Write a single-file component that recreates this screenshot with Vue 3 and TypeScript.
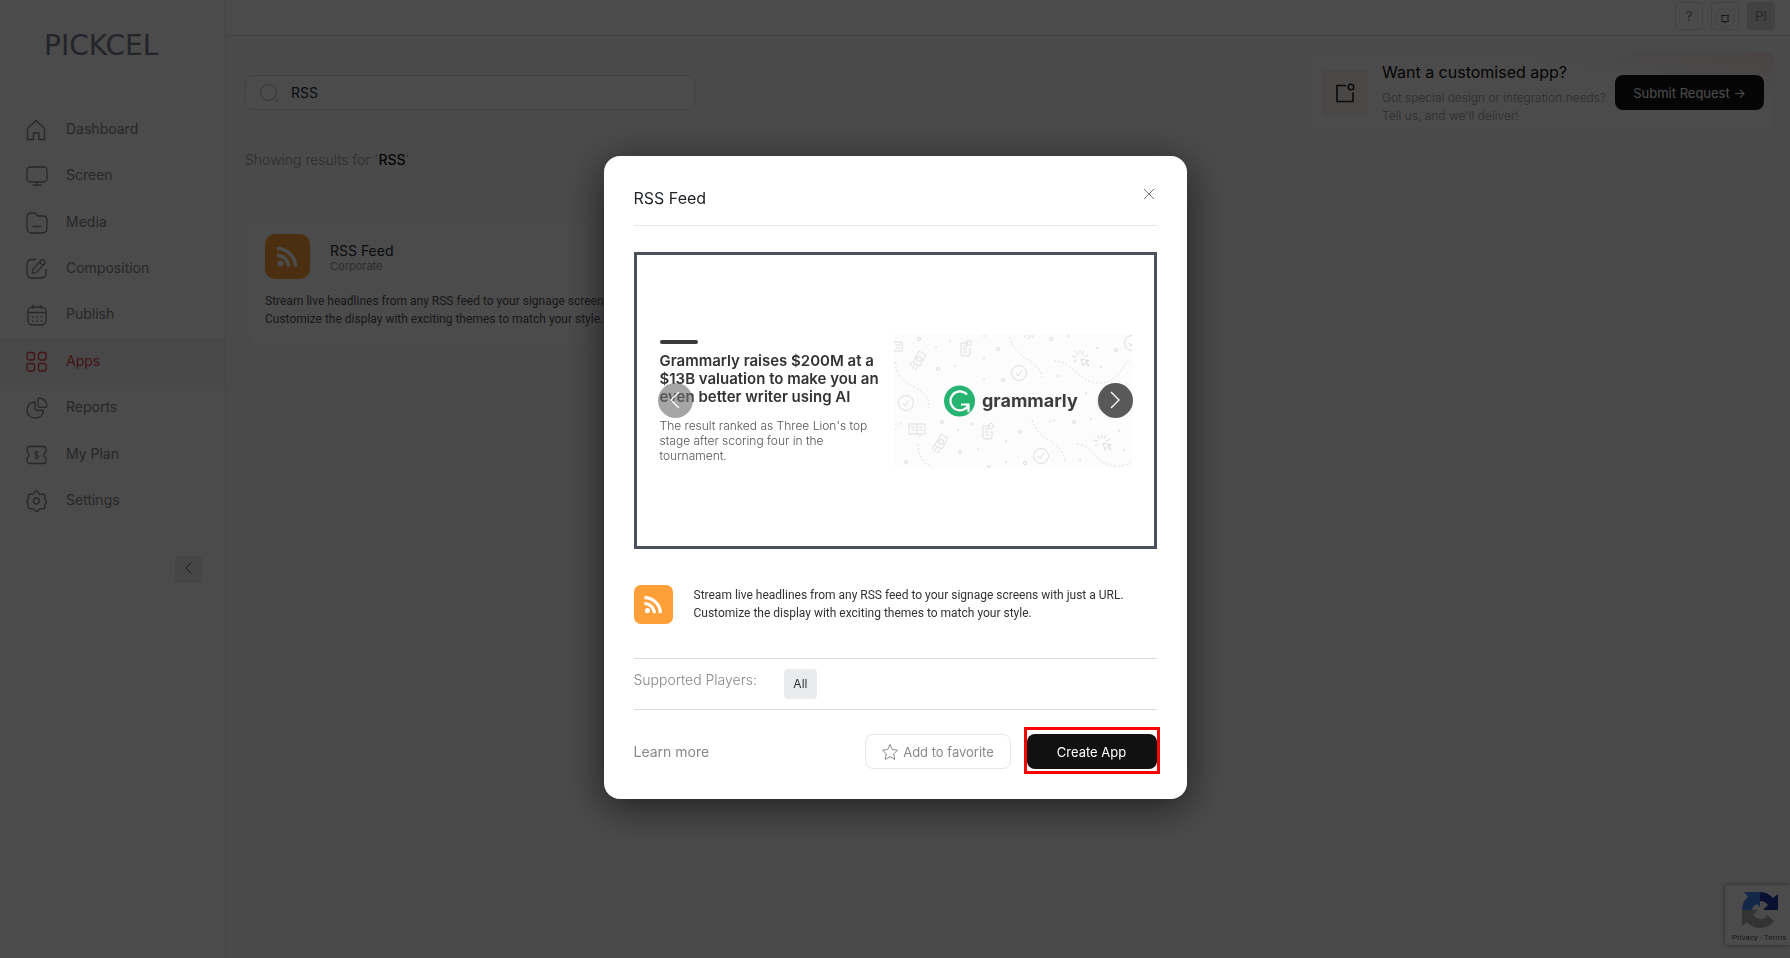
<script setup lang="ts">
import { ref } from 'vue'

interface NavItem {
  label: string
  icon: string
}

const navItems: NavItem[] = [
  { label: 'Dashboard', icon: 'home' },
  { label: 'Screen', icon: 'screen' },
  { label: 'Media', icon: 'media' },
  { label: 'Composition', icon: 'compose' },
  { label: 'Publish', icon: 'publish' },
  { label: 'Apps', icon: 'apps' },
  { label: 'Reports', icon: 'reports' },
  { label: 'My Plan', icon: 'plan' },
  { label: 'Settings', icon: 'settings' },
]

const active = ref('Apps')
const query = ref('RSS')
</script>

<template>
  <div class="page">
    <aside class="sidebar">
      <div class="logo">PICKCEL</div>
      <nav class="nav">
        <a
          v-for="item in navItems"
          :key="item.label"
          href="#"
          class="nav-item"
          :class="{ active: item.label === active }"
          @click.prevent="active = item.label"
        >
          <svg class="nav-icon" viewBox="0 0 22 22" aria-hidden="true">
            <path v-if="item.icon === 'home'" d="M1.5 20.5V9.5L10 1.5l8.500 8v11h-5.500v-6.500h-5.500v6.500z" />
            <g v-else-if="item.icon === 'screen'">
              <rect x="1" y="2" width="20" height="15" rx="3.500" />
              <path d="M11 17v3M6.500 20h9" />
            </g>
            <g v-else-if="item.icon === 'media'">
              <path d="M1 5.500Q1 1 5.500 1H8q1.500 0 2.300 1.200L11.500 4H17q4 0 4 4.500V16q0 5-5 5H6q-5 0-5-5zM6.500 14.500h9" />
            </g>
            <g v-else-if="item.icon === 'compose'">
              <path d="M10 1.500H6q-5 0-5 5V15q0 5 5 5h9q5 0 5-5v-4" />
              <path d="M15 2.300q1.500-1.500 3.300.2t.2 3.400l-8 8.200q-.6.600-1.500.7l-2.500.2.200-2.800q.1-.8.700-1.400zM13.500 4l3.500 3.500" />
            </g>
            <g v-else-if="item.icon === 'publish'">
              <rect x="2" y="3" width="18" height="18" rx="4.500" />
              <path d="M2 8.500h18M7 1v4M15 1v4" />
              <path class="dots" d="M6 13h1.500M10.300 13h1.500M14.600 13h1.500M6 17h1.500M10.300 17h1.500M14.600 17h1.500" />
            </g>
            <g v-else-if="item.icon === 'apps'">
              <rect x="1" y="1.500" width="7.500" height="7.500" rx="2" />
              <rect x="12.500" y="1.500" width="7.500" height="7.500" rx="2" />
              <rect x="1" y="12.500" width="7.500" height="7.500" rx="2" />
              <rect x="12.500" y="12.500" width="7.500" height="7.500" rx="2" />
            </g>
            <g v-else-if="item.icon === 'reports'">
              <path d="M9 5Q1 5.500 1 13.300 1.500 21 9.500 21q7.500-.3 8-7.500h-6q-2.500 0-2.500-2.500z" />
              <path d="M12 2.200Q12 1 13.500 1 20.500 2 21 9q0 1.300-1.500 1.300h-6q-1.500 0-1.500-1.500z" />
            </g>
            <g v-else-if="item.icon === 'plan'">
              <path d="M4 2.500h13q3 0 3 3v2q-2 1.500-2 3.500t2 3.500v2q0 3-3 3H4q-3 0-3-3v-2Q3 13 3 11T1 7.500v-2q0-3 3-3z" />
              <path class="thin" d="M12.500 9q-.2-1.200-2-1.200-2 0-2 1.500 0 1.300 2 1.600 2.200.3 2.200 1.700 0 1.600-2.200 1.600T8.200 13M10.500 6.500v9" />
            </g>
            <g v-else>
              <circle cx="10.500" cy="11" r="3" />
              <path d="M8.600 2.200q1.900-2.100 3.800 0l.7 1.500q.9 1 2.200.7l1.300-.3q2.500.1 2.700 2.600l-.6 1.600q-.2 1 .7 1.800 1.700 1 .5 2.700l-.6.800q-.9.900-.4 2 .5 2.900-2.200 3.300l-1.500-.2q-1.300-.2-2.100.8-1.500 3.300-4.600 1l-.8-1.200q-.7-.8-1.800-.5-3.200.7-3.900-2.400l.3-1.600q.3-1-.5-1.800-1.800-1.800-.2-3.500l.5-.5q.7-.8.3-1.800-.6-2.800 2.400-3.200l1.400.2q1.200.1 1.900-.8z" />
            </g>
          </svg>
          <span>{{ item.label }}</span>
        </a>
      </nav>
      <button class="collapse" type="button" aria-label="Collapse menu">
        <svg viewBox="0 0 12 12" aria-hidden="true"><path d="M8 1 3 6l5 5" /></svg>
      </button>
    </aside>

    <div class="main">
      <header class="topbar">
        <button type="button" class="square">?</button>
        <button type="button" class="square" aria-label="Notifications">
          <svg viewBox="0 0 20 20" aria-hidden="true">
            <circle class="ring" cx="10" cy="10" r="9.500" />
            <path d="M6 13.500h8M7 13V7.500h6V13M5.800 6.500 7.500 8M14.200 6.500 12.500 8M9 14.600h2" />
          </svg>
        </button>
        <button type="button" class="square avatar">PI</button>
      </header>

      <main class="content">
        <div class="results">
          <label class="search">
            <svg viewBox="0 0 18 18" aria-hidden="true">
              <circle cx="8.500" cy="8.500" r="8" />
              <path d="m14.500 14.500 3 3" />
            </svg>
            <input v-model="query" type="text" aria-label="Search apps" />
          </label>
          <p class="showing">Showing results for '<strong>{{ query }}</strong>'</p>
          <article class="card">
            <div class="card-head">
              <svg class="rss" viewBox="0 0 45 45" aria-hidden="true">
                <rect width="45" height="45" rx="10" fill="#ff9f38" />
                <circle cx="15.500" cy="29.500" r="3" fill="#fff" />
                <path d="M12 21.300a11.500 11.500 0 0 1 11.500 11.200M12 14.500a18.500 18.500 0 0 1 18.500 18" fill="none" stroke="#fff" stroke-width="3.600" />
              </svg>
              <div>
                <h2>RSS Feed</h2>
                <span class="category">Corporate</span>
              </div>
            </div>
            <p class="card-text">Stream live headlines from any RSS feed to your signage screens with just a URL.<br />Customize the display with exciting themes to match your style.</p>
          </article>
        </div>

        <section class="custom">
          <div class="tile">
            <svg viewBox="0 0 20 20" aria-hidden="true">
              <path d="M11 2.500H2v16h16v-9" />
              <circle cx="16" cy="4" r="2.800" />
            </svg>
          </div>
          <div class="custom-text">
            <h2>Want a customised app?</h2>
            <p>Got special design or integration needs?<br />Tell us, and we'll deliver!</p>
          </div>
          <button type="button" class="submit">Submit Request →</button>
        </section>
      </main>
    </div>

    <div class="captcha">
      <svg viewBox="0 0 38 38" aria-hidden="true">
        <path fill="#1c3aa9" d="M19 1q8 0 13 6l5-4v16H22l5-5q-3-4-8-4z" />
        <path fill="#4285f4" d="M19 1v10q0 4 0 5l-3-3q-5 2-5 6H1q0-8 6-13L3 1z" />
        <path fill="#ababab" d="M1 19h16l-5 5q3 4 8 4 4 0 6-4l7 6q-5 7-14 7-8 0-13-6l-5 4z" />
      </svg>
      <span>Privacy - Terms</span>
    </div>

    <div class="overlay">
      <div class="modal" role="dialog" aria-modal="true" aria-labelledby="modal-title">
        <div class="modal-head">
          <h1 id="modal-title">RSS Feed</h1>
          <button type="button" class="close" aria-label="Close">
            <svg viewBox="0 0 12 12" aria-hidden="true"><path d="m1 1 10 10M11 1 1 11" /></svg>
          </button>
        </div>

        <div class="frame">
          <div class="slide">
            <div class="story">
              <div class="bar"></div>
              <h3>Grammarly raises $200M at a<br />$13B valuation to make you an<br />even better writer using AI</h3>
              <p>The result ranked as Three Lion's top<br />stage after scoring four in the<br />tournament.</p>
            </div>
            <svg class="art" viewBox="0 0 238 134" role="img" aria-label="grammarly">
              <defs>
                <g id="tick"><circle r="7.500" /><path d="m-3 0 2 3 4-6" /></g>
                <g id="note"><path d="M-4-5h7M-4-5V6q0 2 2 2h5q2 0 2-2V0M-2-2h4M-2 1h4M-2 4h4" /><circle cx="4" cy="-5" r="2.500" /></g>
                <g id="rocket"><path d="m0-8 7 4-6 11-7-4zM-4 5l-3 5M-1 7l-3 4M-7 3l-2 4" /><circle r="2.500" /></g>
                <g id="burst"><path d="M-2-3-5-7M2-3l2-4M0-4v-4M-4-1l-4-1M-4 2l-3 2M4-1l4-2M1 1l2 7 2-3 3 3 1-1-3-3 3-1z" /></g>
                <g id="book"><path d="M0-5v10M-8-5h16V5H-8zM-6-2h4M-6 1h4M2-2h4M2 1h4" /></g>
              </defs>
              <rect width="238" height="134" fill="#fcfcfc" />
              <g class="doodle">
                <use href="#tick" x="125" y="39" />
                <use href="#tick" x="12" y="69" />
                <use href="#tick" x="147" y="122" />
                <use href="#tick" x="238" y="9" />
                <use href="#note" x="71" y="14" />
                <use href="#note" x="93" y="97" />
                <use href="#note" x="208" y="67" />
                <use href="#rocket" x="25" y="25" />
                <use href="#rocket" x="47" y="108" />
                <use href="#burst" x="186" y="24" />
                <use href="#burst" x="208" y="108" />
                <use href="#book" x="23" y="95" />
                <path d="M0 8h8v9H0M2 11h4M2 14h4M130 4l2-3M134 5l3-4M138 4l2-3M93 131l2 3 2-3M155 89l2-3M159 88l2-3" />
                <g class="dash">
                  <path d="M1 28c4 32 34 18 34 46M116 3c4 24 32 22 32 42M160 27c18 0 26 22 45 22 17 0 22-14 30-23M138 86c6 22 32 20 33 42M183 110c16 2 20 22 40 22 8 0 10-1 14-4M1 96l8-9M24 110c0 12 6 19 14 23" />
                </g>
                <g class="small">
                  <circle cx="25" cy="5" r="1.600" /><circle cx="44" cy="35" r="1.600" /><circle cx="104" cy="15" r="1.600" />
                  <circle cx="109" cy="46" r="1.600" /><circle cx="157" cy="5" r="1.600" /><circle cx="222" cy="16" r="1.600" />
                  <circle cx="48" cy="88" r="1.600" /><circle cx="126" cy="98" r="1.600" /><circle cx="66" cy="118" r="1.600" />
                  <circle cx="12" cy="128" r="1.600" /><circle cx="131" cy="129" r="1.600" /><circle cx="180" cy="88" r="1.600" />
                </g>
                <path class="specks" d="M42 13h.1M56 7h.1M61 32h.1M90 2h.1M90 24h.1M90 45h.1M164 42h.1M175 2h.1M203 14h.1M207 33h.1M192 59h.1M197 85h.1M64 96h.1M78 90h.1M84 115h.1M112 107h.1M112 128h.1M186 126h.1M225 97h.1M230 116h.1M26 102h.1" />
              </g>
              <circle cx="65.500" cy="67" r="15.500" fill="#27b473" />
              <path d="M73 60.500a9.500 9.500 0 1 0 1.500 10.500M67 70.500h7.500v7.500" fill="none" stroke="#fff" stroke-width="2.200" />
              <text x="88" y="73" class="wordmark">grammarly</text>
            </svg>
          </div>
          <button type="button" class="arrow prev" aria-label="Previous">
            <svg viewBox="0 0 18 18" aria-hidden="true"><path d="M13 1 5 9l8 8" /></svg>
          </button>
          <button type="button" class="arrow next" aria-label="Next">
            <svg viewBox="0 0 18 18" aria-hidden="true"><path d="m5 1 8 8-8 8" /></svg>
          </button>
        </div>

        <div class="about">
          <svg class="rss" viewBox="0 0 45 45" aria-hidden="true">
            <rect width="45" height="45" rx="8" fill="#ff9f38" />
            <circle cx="15.500" cy="29.500" r="3" fill="#fff" />
            <path d="M12 21.300a11.500 11.500 0 0 1 11.500 11.200M12 14.500a18.500 18.500 0 0 1 18.500 18" fill="none" stroke="#fff" stroke-width="3.600" />
          </svg>
          <p>Stream live headlines from any RSS feed to your signage screens with just a URL.<br />Customize the display with exciting themes to match your style.</p>
        </div>

        <div class="players">
          <span class="players-label">Supported Players:</span>
          <span class="chip">All</span>
        </div>

        <div class="actions">
          <a href="#" class="learn">Learn more</a>
          <button type="button" class="favorite">
            <svg viewBox="0 0 18 18" aria-hidden="true">
              <path d="m9 1.500 2.300 5 5.200.7-3.800 3.700 1 5.500L9 13.700l-4.700 2.700 1-5.500L1.500 7.200l5.200-.7z" />
            </svg>
            Add to favorite
          </button>
          <div class="highlight">
            <button type="button" class="create">Create App</button>
          </div>
        </div>
      </div>
    </div>
  </div>
</template>

<style scoped>
* {
  box-sizing: border-box;
}
h1, h2, h3, p {
  margin: 0;
  font-weight: 400;
}
button, input {
  font: inherit;
  padding: 0;
}
svg {
  display: block;
  flex: none;
  fill: none;
  stroke: currentColor;
}
.page {
  display: flex;
  min-height: 100vh;
  background: #f8f8f8;
  color: #222;
  font-family: Inter, "Noto Sans", sans-serif;
  font-size: 14px;
}
.sidebar {
  display: flex;
  flex-direction: column;
  width: 226px;
  flex: none;
  background: #fafafa;
  border-right: 1px solid #e2e2e2;
}
.logo {
  height: 106px;
  padding-top: 30px;
  padding-left: 44px;
  font-family: "DejaVu Sans", sans-serif;
  font-size: 28px;
  line-height: 32px;
  color: #78788f;
}
.nav {
  display: grid;
  grid-auto-rows: 1fr;
  height: 418px;
}
.nav-item {
  display: flex;
  align-items: center;
  gap: 18px;
  padding-left: 26px;
  padding-bottom: 2px;
  color: #858585;
  text-decoration: none;
}
.nav-item.active {
  background: #f0f0f0;
  color: #e0404a;
}
.nav-icon {
  width: 22px;
  height: 22px;
  margin-top: 3px;
  stroke-width: 1.3;
}
.nav-icon .thin {
  stroke-width: 1;
}
.nav-icon .dots {
  stroke-width: 1.4;
}
.collapse {
  display: grid;
  place-items: center;
  width: 27px;
  height: 27px;
  margin: 32px 23px 0 auto;
  border: 0;
  border-radius: 4px;
  background: #ebebeb;
  color: #555;
}
.collapse svg {
  width: 12px;
  height: 12px;
  margin-bottom: 3px;
}
.main {
  flex: 1;
  min-width: 0;
}
.topbar {
  display: flex;
  justify-content: flex-end;
  gap: 8px;
  height: 36px;
  padding: 2px 15px 0 0;
  background: #fafafa;
  border-bottom: 1px solid #dcdcdc;
}
.square {
  display: grid;
  place-items: center;
  width: 28px;
  height: 28px;
  border: 1px solid #dcdcdc;
  border-radius: 4px;
  background: transparent;
  color: #858585;
  font-size: 13px;
}
.square svg {
  width: 20px;
  height: 20px;
  margin-top: 3px;
  color: #555;
}
.square .ring {
  stroke: #ddd;
}
.square.avatar {
  border-color: #dcdcdc;
  background: #dcdcdc;
}
.content {
  display: flex;
  justify-content: space-between;
  align-items: flex-start;
  padding: 16px 15px 0 19px;
}
.results {
  padding-top: 23px;
}
.search {
  display: flex;
  align-items: center;
  gap: 13px;
  width: 450px;
  height: 35px;
  padding: 0 14px;
  border: 1px solid #dcdcdc;
  border-radius: 8px;
  background: #fafafa;
}
.search svg {
  width: 18px;
  height: 18px;
  color: #ababab;
}
.search input {
  flex: 1;
  border: 0;
  outline: 0;
  background: transparent;
  color: #1f3440;
}
.showing {
  margin-top: 40px;
  line-height: 20px;
  color: #999;
  font-weight: 300;
}
.showing strong {
  color: #111;
  font-weight: 500;
}
.card {
  width: 480px;
  height: 127px;
  margin: 47px 0 0 3px;
  padding: 17px;
  border-radius: 8px;
  background: #fafafa;
  box-shadow: 0 0 2px #ddd;
}
.card-head {
  display: flex;
  align-items: center;
  gap: 20px;
}
.card .rss {
  width: 45px;
  height: 45px;
  stroke: none;
}
.card h2 {
  font-size: 14px;
  line-height: 18px;
  color: #1f2a30;
}
.category {
  display: block;
  font-size: 11px;
  line-height: 12px;
  color: #999;
}
.card-text {
  margin-top: 13px;
  font-family: Roboto, sans-serif;
  font-size: 12px;
  line-height: 18px;
  color: #555;
}
.custom {
  display: flex;
  align-items: center;
  width: 464px;
  height: 81px;
  padding: 0 10px;
  border: 1px solid #f0f0f0;
  border-radius: 10px;
  background: linear-gradient(10deg, #fafafa 70%, #f7e6e3);
}
.tile {
  display: grid;
  place-items: center;
  width: 46px;
  height: 46px;
  border: 1px solid #f2e8e4;
  border-radius: 4px;
  background: #f5f0ec;
  color: #222;
}
.tile svg {
  width: 20px;
  height: 20px;
  stroke-width: 1.6;
}
.custom-text {
  flex: 1;
  padding-left: 14px;
  white-space: nowrap;
}
.custom-text h2 {
  font-size: 16px;
  line-height: 24px;
  color: #111;
}
.custom-text p {
  margin-top: 5px;
  font-size: 12px;
  font-weight: 300;
  line-height: 18px;
  color: #999;
}
.submit {
  width: 149px;
  height: 35px;
  border: 0;
  border-radius: 8px;
  background: #111;
  color: #fff;
  font-size: 13px;
}
.captcha {
  position: fixed;
  right: 0;
  bottom: 13px;
  width: 65px;
  height: 60px;
  padding-top: 6px;
  overflow: hidden;
  border-radius: 3px 0 0 3px;
  background: #fafafa;
  box-shadow: 0 0 5px #808080;
}
.captcha svg {
  width: 38px;
  height: 38px;
  margin-left: 16px;
  stroke: none;
}
.captcha span {
  display: block;
  margin-top: 4px;
  padding-left: 7px;
  font-family: Roboto, sans-serif;
  font-size: 8px;
  line-height: 10px;
  white-space: nowrap;
  color: #555;
}
.overlay {
  position: fixed;
  inset: 0;
  display: flex;
  align-items: center;
  justify-content: center;
  padding-bottom: 3px;
  background: rgba(0, 0, 0, 0.7);
}
.modal {
  width: 583px;
  padding: 30px;
  border-radius: 16px;
  background: #fff;
  box-shadow: 0 8px 40px rgba(0, 0, 0, 0.6);
}
.modal-head {
  display: flex;
  justify-content: space-between;
  height: 40px;
  border-bottom: 1px solid #e8e8e8;
}
.modal-head h1 {
  font-size: 16px;
  line-height: 24px;
  color: #212529;
}
.close {
  display: grid;
  place-items: center;
  width: 16px;
  height: 16px;
  border: 0;
  background: none;
  color: #777;
}
.close svg {
  width: 12px;
  height: 12px;
}
.frame {
  position: relative;
  height: 297px;
  margin-top: 26px;
  border: 3px solid #4a525e;
}
.slide {
  display: flex;
  align-items: center;
  justify-content: space-between;
  height: 100%;
  padding: 0 22px 0 23px;
}
.story {
  padding-top: 1px;
  white-space: nowrap;
}
.bar {
  width: 38px;
  height: 4px;
  border-radius: 2px;
  background: #3a3a3a;
}
.story h3 {
  margin-top: 8px;
  font-size: 15px;
  font-weight: 600;
  line-height: 18px;
  color: #333;
}
.story p {
  margin-top: 12px;
  font-size: 12px;
  line-height: 15px;
  font-weight: 300;
  color: #555;
}
.art {
  width: 238px;
  height: 134px;
  stroke: none;
}
.doodle {
  fill: none;
  stroke: #dedede;
  stroke-width: 1;
}
.dash {
  stroke-dasharray: 2 2;
}
.specks {
  stroke: #ccc;
  stroke-width: 1.5;
  stroke-linecap: round;
}
.wordmark {
  font-family: Inter, sans-serif;
  font-size: 18px;
  font-weight: 700;
  fill: #3d3d3d;
}
.arrow {
  position: absolute;
  top: 50%;
  display: grid;
  place-items: center;
  width: 35px;
  height: 35px;
  margin-top: -18px;
  border: 0;
  border-radius: 50%;
  color: #fff;
  background: rgba(60, 60, 60, 0.85);
}
.arrow svg {
  width: 18px;
  height: 18px;
  stroke-width: 1.3;
}
.prev {
  left: 21px;
  background: rgba(110, 110, 110, 0.62);
}
.next {
  right: 21px;
}
.about {
  display: flex;
  align-items: center;
  gap: 21px;
  margin-top: 36px;
}
.about .rss {
  width: 39px;
  height: 39px;
  stroke: none;
}
.about p {
  padding-bottom: 2px;
  font-family: Roboto, sans-serif;
  font-size: 12px;
  line-height: 18px;
  color: #333;
}
.players {
  display: flex;
  gap: 27px;
  height: 52px;
  margin-top: 34px;
  padding-top: 10px;
  border-top: 1px solid #dcdcdc;
  border-bottom: 1px solid #dcdcdc;
}
.players-label {
  line-height: 22px;
  font-weight: 300;
  color: #888;
}
.chip {
  width: 33px;
  height: 30px;
  border-radius: 4px;
  background: #e9ecef;
  font-size: 12px;
  line-height: 30px;
  text-align: center;
  color: #333;
}
.actions {
  display: flex;
  align-items: center;
  margin-top: 24px;
}
.learn {
  margin-right: auto;
  color: #888;
  text-decoration: none;
}
.favorite {
  display: flex;
  align-items: center;
  justify-content: center;
  gap: 4px;
  width: 146px;
  height: 35px;
  border: 1px solid #e6e6e6;
  border-radius: 8px;
  background: #fff;
  color: #8a8a8a;
  font-size: 13px;
}
.favorite svg {
  width: 18px;
  height: 18px;
}
.highlight {
  margin: -7px -3px -5px 13px;
  padding: 4px 0 2px;
  border: 3px solid #f00;
}
.create {
  display: block;
  width: 130px;
  height: 35px;
  border: 0;
  border-radius: 8px;
  background: #111;
  color: #fff;
  font-size: 13px;
}
</style>

<style>
body {
  margin: 0;
}
</style>
